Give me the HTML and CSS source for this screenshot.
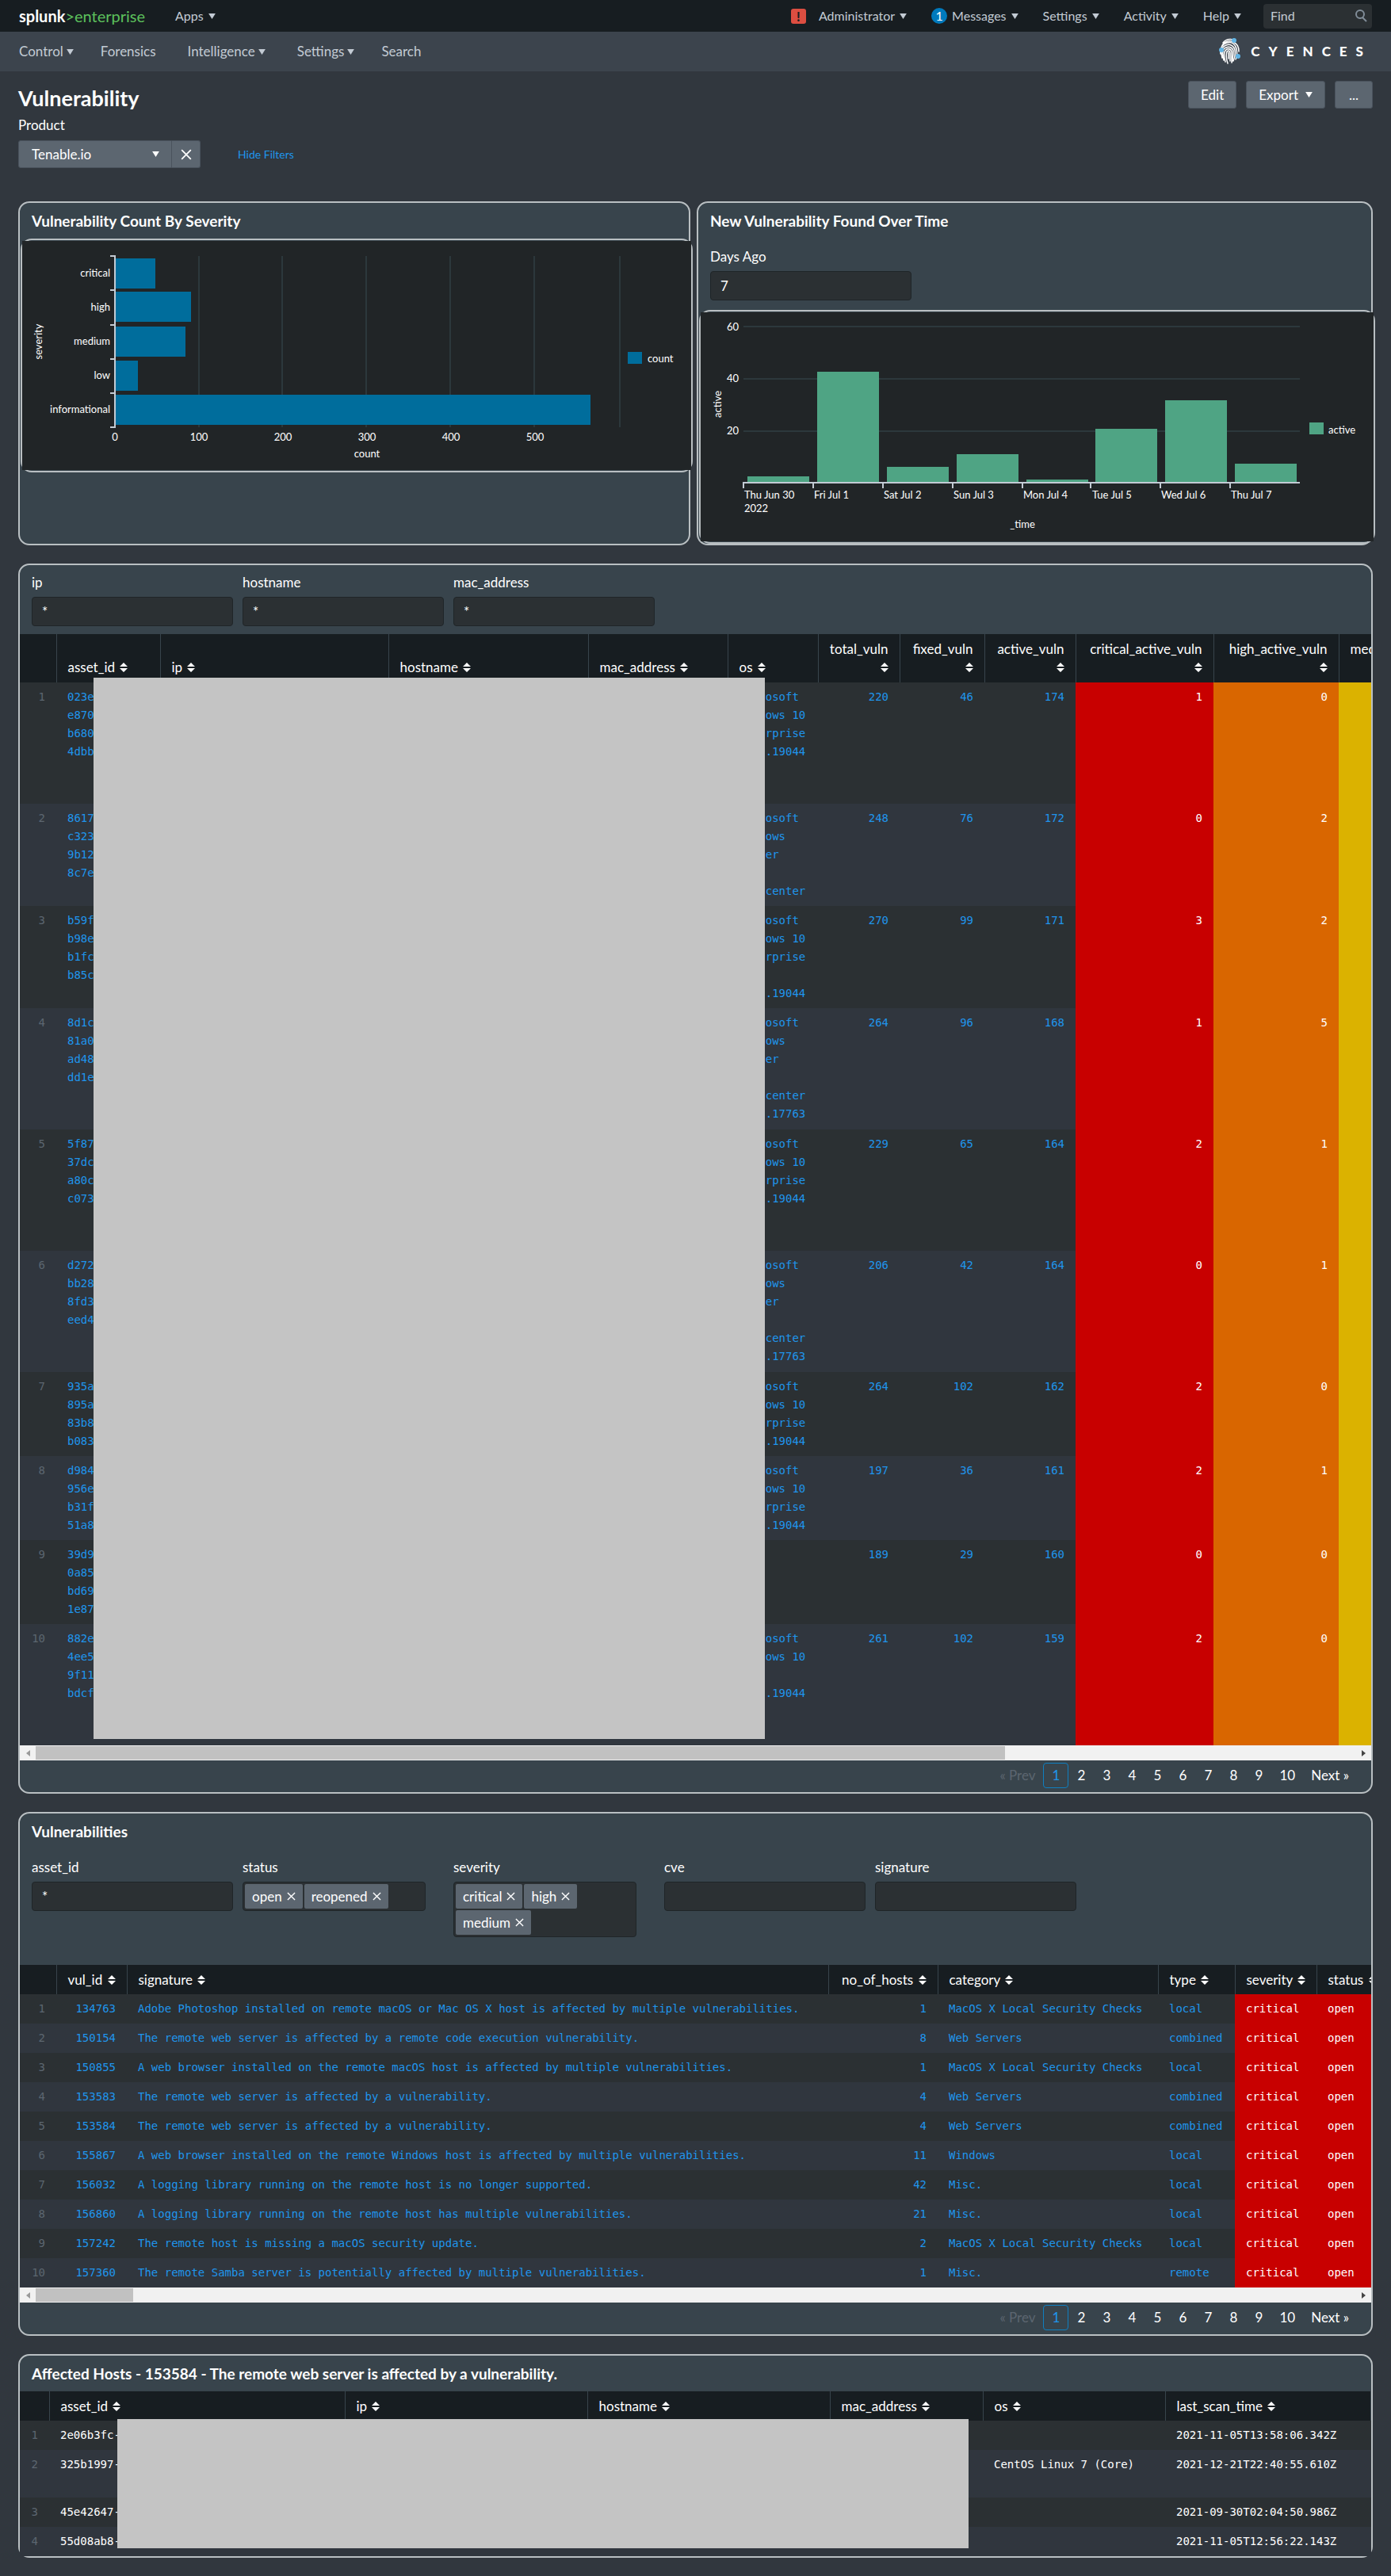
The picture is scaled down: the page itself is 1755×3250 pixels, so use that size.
FILE: index.html
```html
<!DOCTYPE html>
<html lang="en">
<head>
<meta charset="utf-8">
<meta name="viewport" content="width=device-width, initial-scale=1">
<title>Vulnerability | Splunk</title>
<link rel="stylesheet" href="styles.css">
</head>
<body>
<svg class="defs" aria-hidden="true">
  <symbol id="caret" viewBox="0 0 10 8"><path d="M0 0h10L5 8z" fill="currentColor"/></symbol>
  <symbol id="sort" viewBox="0 0 10 12"><path d="M5 0l5 5H0zM5 12L0 7h10z" fill="currentColor"/></symbol>
  <symbol id="cross" viewBox="0 0 12 12"><path d="M1 1l10 10M11 1L1 11" fill="none" stroke="currentColor" stroke-width="1.5"/></symbol>
  <symbol id="left" viewBox="0 0 5 8"><path d="M5 0v8L0 4z" fill="currentColor"/></symbol>
  <symbol id="right" viewBox="0 0 5 8"><path d="M0 0v8l5-4z" fill="currentColor"/></symbol>
</svg>

<header class="topbar">
  <a class="logo" href="#"><b>splunk</b><span>&gt;enterprise</span></a>
  <a class="menu" href="#">Apps <svg class="caret"><use href="#caret"/></svg></a>
  <nav class="account">
    <span class="alert">!</span>
    <a class="menu" href="#">Administrator <svg class="caret"><use href="#caret"/></svg></a>
    <a class="menu messages" href="#"><span class="count">1</span>Messages <svg class="caret"><use href="#caret"/></svg></a>
    <a class="menu" href="#">Settings <svg class="caret"><use href="#caret"/></svg></a>
    <a class="menu" href="#">Activity <svg class="caret"><use href="#caret"/></svg></a>
    <a class="menu" href="#">Help <svg class="caret"><use href="#caret"/></svg></a>
  </nav>
  <label class="find"><input type="text" placeholder="Find" aria-label="Find">
    <svg viewBox="0 0 16 16"><circle cx="7" cy="6" r="5" fill="none" stroke="currentColor" stroke-width="2"/><path d="M10 10l5 5" stroke="currentColor" stroke-width="2"/></svg></label>
</header>

<nav class="appnav">
  <a class="menu" href="#">Control<svg class="caret"><use href="#caret"/></svg></a>
  <a class="menu" href="#">Forensics</a>
  <a class="menu" href="#">Intelligence<svg class="caret"><use href="#caret"/></svg></a>
  <a class="menu" href="#">Settings<svg class="caret"><use href="#caret"/></svg></a>
  <a class="menu" href="#">Search</a>
  <a class="brand" href="#">
    <svg viewBox="0 0 27 34" fill="none" stroke="#fff" stroke-width="1.5" stroke-linecap="round">
      <path d="M5 6C8 2 13 1 18 2M3 12C5 5 12 2 18 5c5 2 7 7 7 12M2 20C1 12 5 7 10 6c6-2 11 2 12 8 1 5 1 9-1 13M4 25c-2-8-1-14 5-16 5-2 10 1 11 6 1 6 0 10-2 14M6 28C4 20 4 13 9 12c4-2 8 0 9 4 0 6 0 9-2 15M8 30c-2-7-2-14 2-16 3-1 5 0 6 3v14M11 32c-2-6-2-12-1-15 2-2 4-1 4 2v10M12 18v8"/>
      <g fill="#62b5e5" stroke="none"><circle cx="19" cy="3" r="3"/><circle cx="3" cy="15" r="3"/><circle cx="24" cy="23" r="3"/></g>
    </svg>
    <span>CYENCES</span>
  </a>
</nav>

<main>
  <div class="heading">
    <h1>Vulnerability</h1>
    <div class="actions">
      <button type="button">Edit</button>
      <button type="button">Export <svg class="caret"><use href="#caret"/></svg></button>
      <button type="button">...</button>
    </div>
  </div>
  <div class="product">
    <label for="product">Product</label>
    <div class="product-row">
      <div class="select"><select id="product"><option>Tenable.io</option></select><svg class="caret"><use href="#caret"/></svg></div>
      <button class="clear" type="button" aria-label="Clear"><svg><use href="#cross"/></svg></button>
      <a href="#">Hide Filters</a>
    </div>
  </div>

  <div class="charts">
    <section class="panel">
      <h2>Vulnerability Count By Severity</h2>
      <div class="chart">
        <svg viewBox="0 0 844 289">
          <g class="grid"><path d="M223 19v216M328 19v216M434 19v216M540 19v216M646 19v216M754 19v216"/></g>
          <g fill="#006d9c">
            <rect x="117" y="22" width="51" height="38"/><rect x="117" y="64" width="96" height="38"/><rect x="117" y="108" width="89" height="38"/><rect x="117" y="151" width="29" height="38"/><rect x="117" y="194" width="600" height="38"/>
            <rect x="764" y="140" width="18" height="15"/>
          </g>
          <path class="axis" d="M111 19h6v216h-6M111 62h6M111 106h6M111 149h6M111 192h6"/>
          <g text-anchor="end"><text x="111" y="45">critical</text><text x="111" y="88">high</text><text x="111" y="131">medium</text><text x="111" y="174">low</text><text x="111" y="217">informational</text></g>
          <g text-anchor="middle"><text x="117" y="252">0</text><text x="223" y="252">100</text><text x="329" y="252">200</text><text x="435" y="252">300</text><text x="541" y="252">400</text><text x="647" y="252">500</text><text x="435" y="273">count</text><text transform="translate(25 127) rotate(-90)">severity</text></g>
          <text x="789" y="153">count</text>
        </svg>
      </div>
    </section>
    <section class="panel">
      <h2>New Vulnerability Found Over Time</h2>
      <div class="filters short">
        <div class="field"><label for="days">Days Ago</label><input id="days" type="text" value="7"></div>
      </div>
      <div class="chart">
        <svg viewBox="0 0 849 289">
          <g class="grid"><path d="M54 18h702M54 84h702M54 150h702"/></g>
          <g fill="#4fa484">
            <rect x="59" y="207" width="78" height="8"/><rect x="147" y="75" width="78" height="140"/><rect x="235" y="195" width="78" height="20"/><rect x="323" y="179" width="78" height="36"/><rect x="411" y="211" width="78" height="4"/><rect x="498" y="147" width="78" height="68"/><rect x="586" y="111" width="78" height="104"/><rect x="674" y="191" width="78" height="24"/>
            <rect x="768" y="139" width="18" height="15"/>
          </g>
          <path class="axis" d="M54 222v-7h702M142 215v7M230 215v7M318 215v7M406 215v7M492 215v7M580 215v7M668 215v7"/>
          <g text-anchor="end"><text x="48" y="23">60</text><text x="48" y="88">40</text><text x="48" y="154">20</text></g>
          <text x="55" y="235">Thu Jun 30</text><text x="55" y="252">2022</text><text x="143" y="235">Fri Jul 1</text><text x="231" y="235">Sat Jul 2</text><text x="319" y="235">Sun Jul 3</text><text x="407" y="235">Mon Jul 4</text><text x="494" y="235">Tue Jul 5</text><text x="581" y="235">Wed Jul 6</text><text x="669" y="235">Thu Jul 7</text>
          <g text-anchor="middle"><text x="406" y="272">_time</text><text transform="translate(26 116) rotate(-90)">active</text></g>
          <text x="792" y="153">active</text>
        </svg>
      </div>
    </section>
  </div>

  <section class="panel">
    <div class="filters">
      <div class="field"><label for="ip">ip</label><input id="ip" type="text" value="*"></div>
      <div class="field"><label for="host">hostname</label><input id="host" type="text" value="*"></div>
      <div class="field"><label for="mac">mac_address</label><input id="mac" type="text" value="*"></div>
    </div>
    <div class="table-wrap">
      <table class="assets">
        <colgroup><col class="w46"><col class="w131"><col class="w288"><col class="w252"><col class="w176"><col class="w114"><col class="w103"><col class="w107"><col class="w115"><col class="w174"><col class="w158"><col></colgroup>
        <thead><tr><th></th>
          <th><a href="#">asset_id <svg class="sort"><use href="#sort"/></svg></a></th>
          <th><a href="#">ip <svg class="sort"><use href="#sort"/></svg></a></th>
          <th><a href="#">hostname <svg class="sort"><use href="#sort"/></svg></a></th>
          <th><a href="#">mac_address <svg class="sort"><use href="#sort"/></svg></a></th>
          <th><a href="#">os <svg class="sort"><use href="#sort"/></svg></a></th>
          <th class="num"><a href="#">total_vuln<br><svg class="sort"><use href="#sort"/></svg></a></th>
          <th class="num"><a href="#">fixed_vuln<br><svg class="sort"><use href="#sort"/></svg></a></th>
          <th class="num"><a href="#">active_vuln<br><svg class="sort"><use href="#sort"/></svg></a></th>
          <th class="num"><a href="#">critical_active_vuln<br><svg class="sort"><use href="#sort"/></svg></a></th>
          <th class="num"><a href="#">high_active_vuln<br><svg class="sort"><use href="#sort"/></svg></a></th>
          <th class="num"><a href="#">medium_active_vuln<br><svg class="sort"><use href="#sort"/></svg></a></th></tr></thead>
        <tbody>
          <tr class="tall"><td>1</td><td>023e<br>e870<br>b680<br>4dbb</td><td></td><td></td><td></td><td>Microsoft<br>Windows 10<br>Enterprise<br>10.0.19044</td><td class="num">220</td><td class="num">46</td><td class="num">174</td><td class="num red">1</td><td class="num orange">0</td><td class="yellow"></td></tr>
          <tr><td>2</td><td>8617<br>c323<br>9b12<br>8c7e</td><td></td><td></td><td></td><td>Microsoft<br>Windows<br>Server<br>2019<br>Datacenter</td><td class="num">248</td><td class="num">76</td><td class="num">172</td><td class="num red">0</td><td class="num orange">2</td><td class="yellow"></td></tr>
          <tr><td>3</td><td>b59f<br>b98e<br>b1fc<br>b85c</td><td></td><td></td><td></td><td>Microsoft<br>Windows 10<br>Enterprise<br><br>10.0.19044</td><td class="num">270</td><td class="num">99</td><td class="num">171</td><td class="num red">3</td><td class="num orange">2</td><td class="yellow"></td></tr>
          <tr class="tall"><td>4</td><td>8d1c<br>81a0<br>ad48<br>dd1e</td><td></td><td></td><td></td><td>Microsoft<br>Windows<br>Server<br>2019<br>Datacenter<br>10.0.17763</td><td class="num">264</td><td class="num">96</td><td class="num">168</td><td class="num red">1</td><td class="num orange">5</td><td class="yellow"></td></tr>
          <tr class="tall"><td>5</td><td>5f87<br>37dc<br>a80c<br>c073</td><td></td><td></td><td></td><td>Microsoft<br>Windows 10<br>Enterprise<br>10.0.19044</td><td class="num">229</td><td class="num">65</td><td class="num">164</td><td class="num red">2</td><td class="num orange">1</td><td class="yellow"></td></tr>
          <tr class="tall"><td>6</td><td>d272<br>bb28<br>8fd3<br>eed4</td><td></td><td></td><td></td><td>Microsoft<br>Windows<br>Server<br>2019<br>Datacenter<br>10.0.17763</td><td class="num">206</td><td class="num">42</td><td class="num">164</td><td class="num red">0</td><td class="num orange">1</td><td class="yellow"></td></tr>
          <tr><td>7</td><td>935a<br>895a<br>83b8<br>b083</td><td></td><td></td><td></td><td>Microsoft<br>Windows 10<br>Enterprise<br>10.0.19044</td><td class="num">264</td><td class="num">102</td><td class="num">162</td><td class="num red">2</td><td class="num orange">0</td><td class="yellow"></td></tr>
          <tr><td>8</td><td>d984<br>956e<br>b31f<br>51a8</td><td></td><td></td><td></td><td>Microsoft<br>Windows 10<br>Enterprise<br>10.0.19044</td><td class="num">197</td><td class="num">36</td><td class="num">161</td><td class="num red">2</td><td class="num orange">1</td><td class="yellow"></td></tr>
          <tr><td>9</td><td>39d9<br>0a85<br>bd69<br>1e87</td><td></td><td></td><td></td><td></td><td class="num">189</td><td class="num">29</td><td class="num">160</td><td class="num red">0</td><td class="num orange">0</td><td class="yellow"></td></tr>
          <tr class="tall"><td>10</td><td>882e<br>4ee5<br>9f11<br>bdcf</td><td></td><td></td><td></td><td>Microsoft<br>Windows 10<br><br>10.0.19044</td><td class="num">261</td><td class="num">102</td><td class="num">159</td><td class="num red">2</td><td class="num orange">0</td><td class="yellow"></td></tr>
        </tbody>
      </table>
      <div class="mask mask-assets"></div>
    </div>
    <div class="scrollbar"><svg><use href="#left"/></svg><div class="track"><div class="thumb" style="width:73.4%"></div></div><svg><use href="#right"/></svg></div>
    <nav class="pages"><span class="off">« Prev</span><a class="on" href="#">1</a><a href="#">2</a><a href="#">3</a><a href="#">4</a><a href="#">5</a><a href="#">6</a><a href="#">7</a><a href="#">8</a><a href="#">9</a><a href="#">10</a><a href="#">Next »</a></nav>
  </section>

  <section class="panel">
    <h2>Vulnerabilities</h2>
    <div class="filters long">
      <div class="field"><label for="asset">asset_id</label><input id="asset" type="text" value="*"></div>
      <div class="field"><span class="label" id="status-label">status</span>
        <div class="multi" role="group" aria-labelledby="status-label"><button type="button">open <svg><use href="#cross"/></svg></button><button type="button">reopened <svg><use href="#cross"/></svg></button></div></div>
      <div class="field"><span class="label" id="severity-label">severity</span>
        <div class="multi" role="group" aria-labelledby="severity-label"><button type="button">critical <svg><use href="#cross"/></svg></button><button type="button">high <svg><use href="#cross"/></svg></button><button type="button">medium <svg><use href="#cross"/></svg></button></div></div>
      <div class="field"><label for="cve">cve</label><input id="cve" type="text"></div>
      <div class="field"><label for="signature">signature</label><input id="signature" type="text"></div>
    </div>
    <div class="table-wrap">
      <table class="vulns">
        <colgroup><col class="w46"><col class="w89"><col class="w885"><col class="w138"><col class="w278"><col class="w97"><col class="w103"><col></colgroup>
        <thead><tr><th></th>
          <th><a href="#">vul_id <svg class="sort"><use href="#sort"/></svg></a></th>
          <th><a href="#">signature <svg class="sort"><use href="#sort"/></svg></a></th>
          <th class="num"><a href="#">no_of_hosts <svg class="sort"><use href="#sort"/></svg></a></th>
          <th><a href="#">category <svg class="sort"><use href="#sort"/></svg></a></th>
          <th><a href="#">type <svg class="sort"><use href="#sort"/></svg></a></th>
          <th><a href="#">severity <svg class="sort"><use href="#sort"/></svg></a></th>
          <th><a href="#">status <svg class="sort"><use href="#sort"/></svg></a></th></tr></thead>
        <tbody>
          <tr><td>1</td><td class="num">134763</td><td>Adobe Photoshop installed on remote macOS or Mac OS X host is affected by multiple vulnerabilities.</td><td class="num">1</td><td>MacOS X Local Security Checks</td><td>local</td><td class="red">critical</td><td class="red">open</td></tr>
          <tr><td>2</td><td class="num">150154</td><td>The remote web server is affected by a remote code execution vulnerability.</td><td class="num">8</td><td>Web Servers</td><td>combined</td><td class="red">critical</td><td class="red">open</td></tr>
          <tr><td>3</td><td class="num">150855</td><td>A web browser installed on the remote macOS host is affected by multiple vulnerabilities.</td><td class="num">1</td><td>MacOS X Local Security Checks</td><td>local</td><td class="red">critical</td><td class="red">open</td></tr>
          <tr><td>4</td><td class="num">153583</td><td>The remote web server is affected by a vulnerability.</td><td class="num">4</td><td>Web Servers</td><td>combined</td><td class="red">critical</td><td class="red">open</td></tr>
          <tr><td>5</td><td class="num">153584</td><td>The remote web server is affected by a vulnerability.</td><td class="num">4</td><td>Web Servers</td><td>combined</td><td class="red">critical</td><td class="red">open</td></tr>
          <tr><td>6</td><td class="num">155867</td><td>A web browser installed on the remote Windows host is affected by multiple vulnerabilities.</td><td class="num">11</td><td>Windows</td><td>local</td><td class="red">critical</td><td class="red">open</td></tr>
          <tr><td>7</td><td class="num">156032</td><td>A logging library running on the remote host is no longer supported.</td><td class="num">42</td><td>Misc.</td><td>local</td><td class="red">critical</td><td class="red">open</td></tr>
          <tr><td>8</td><td class="num">156860</td><td>A logging library running on the remote host has multiple vulnerabilities.</td><td class="num">21</td><td>Misc.</td><td>local</td><td class="red">critical</td><td class="red">open</td></tr>
          <tr><td>9</td><td class="num">157242</td><td>The remote host is missing a macOS security update.</td><td class="num">2</td><td>MacOS X Local Security Checks</td><td>local</td><td class="red">critical</td><td class="red">open</td></tr>
          <tr><td>10</td><td class="num">157360</td><td>The remote Samba server is potentially affected by multiple vulnerabilities.</td><td class="num">1</td><td>Misc.</td><td>remote</td><td class="red">critical</td><td class="red">open</td></tr>
        </tbody>
      </table>
    </div>
    <div class="scrollbar"><svg><use href="#left"/></svg><div class="track"><div class="thumb" style="width:7.4%"></div></div><svg><use href="#right"/></svg></div>
    <nav class="pages"><span class="off">« Prev</span><a class="on" href="#">1</a><a href="#">2</a><a href="#">3</a><a href="#">4</a><a href="#">5</a><a href="#">6</a><a href="#">7</a><a href="#">8</a><a href="#">9</a><a href="#">10</a><a href="#">Next »</a></nav>
  </section>

  <section class="panel">
    <h2>Affected Hosts - 153584 - The remote web server is affected by a vulnerability.</h2>
    <div class="table-wrap">
      <table class="hosts">
        <colgroup><col class="w37"><col class="w373"><col class="w306"><col class="w306"><col class="w193"><col class="w230"><col></colgroup>
        <thead><tr><th></th>
          <th><a href="#">asset_id <svg class="sort"><use href="#sort"/></svg></a></th>
          <th><a href="#">ip <svg class="sort"><use href="#sort"/></svg></a></th>
          <th><a href="#">hostname <svg class="sort"><use href="#sort"/></svg></a></th>
          <th><a href="#">mac_address <svg class="sort"><use href="#sort"/></svg></a></th>
          <th><a href="#">os <svg class="sort"><use href="#sort"/></svg></a></th>
          <th><a href="#">last_scan_time <svg class="sort"><use href="#sort"/></svg></a></th></tr></thead>
        <tbody>
          <tr><td>1</td><td>2e06b3fc-</td><td></td><td></td><td></td><td></td><td>2021-11-05T13:58:06.342Z</td></tr>
          <tr class="double"><td>2</td><td>325b1997-</td><td></td><td></td><td></td><td>CentOS Linux 7 (Core)</td><td>2021-12-21T22:40:55.610Z</td></tr>
          <tr><td>3</td><td>45e42647-</td><td></td><td></td><td></td><td></td><td>2021-09-30T02:04:50.986Z</td></tr>
          <tr><td>4</td><td>55d08ab8-</td><td></td><td></td><td></td><td></td><td>2021-11-05T12:56:22.143Z</td></tr>
        </tbody>
      </table>
      <div class="mask mask-hosts"></div>
    </div>
  </section>
</main>
</body>
</html>
```
FILE: styles.css
```css
* { box-sizing: border-box; }
body {
  margin: 0;
  background: #31373e;
  color: #fff;
  font: 17px/24px Lato, "Open Sans", sans-serif;
}
a { color: inherit; text-decoration: none; }
button, input, select { font: inherit; color: inherit; margin: 0; }
button { cursor: pointer; }
.defs { display: none; }
.caret { width: 9px; height: 7px; flex: none; }
.sort { width: 10px; height: 12px; margin-left: 2px; }

.topbar { display: flex; align-items: center; height: 40px; padding: 0 24px; background: #171d21; font-size: 16px; color: #c3cbd4; }
.menu { display: flex; align-items: center; gap: 6px; }
.logo { font-size: 20px; color: #5cc05c; margin-right: 38px; }
.logo b { color: #fff; }
.account { display: flex; align-items: center; gap: 31px; margin-left: auto; }
.alert { width: 19px; height: 19px; line-height: 19px; margin-right: -15px; border-radius: 3px; background: #dc4e41; color: #171d21; text-align: center; font-weight: 900; }
.count { width: 20px; height: 20px; line-height: 20px; border-radius: 50%; background: #007abd; color: #fff; text-align: center; }
.find { display: flex; align-items: center; width: 137px; height: 31px; margin-left: 28px; padding: 0 6px 0 9px; border-radius: 4px; background: #2b3033; color: #818d99; }
.find input { flex: 1; min-width: 0; padding: 0; border: 0; outline: 0; background: none; }
.find input::placeholder { color: #c3cbd4; opacity: 1; }
.find svg { width: 16px; height: 16px; }

.appnav { display: flex; align-items: center; height: 50px; padding: 0 24px; background: #3c444d; color: #c3cbd4; }
.appnav .menu { gap: 4px; margin-right: 34px; }
.appnav .menu:nth-child(2), .appnav .menu:nth-child(3) { margin-right: 40px; }
.brand { display: flex; align-items: center; gap: 13px; margin-left: auto; color: #fff; font-weight: 900; font-size: 17px; }
.brand svg { width: 27px; height: 34px; }
.brand span { letter-spacing: 11px; }

main { padding: 0 23px 24px; }
.heading { display: flex; justify-content: space-between; align-items: flex-start; padding-top: 12px; }
h1 { margin: 5px 0 0; font-size: 27px; line-height: 34px; font-weight: 700; }
.actions { display: flex; gap: 12px; }
.actions button, .select select, .clear { height: 35px; border: 1px solid #4a535d; background: #5c6670; border-radius: 3px; }
.actions button { display: flex; align-items: center; justify-content: center; gap: 9px; min-width: 48px; padding: 0 15px; }
.product { padding-top: 5px; }
.product-row { display: flex; align-items: center; padding-top: 7px; }
.select { position: relative; width: 194px; }
.select select { display: block; width: 100%; padding: 0 16px; appearance: none; border-radius: 3px 0 0 3px; }
.select .caret { position: absolute; right: 16px; top: 14px; }
.clear { display: grid; place-items: center; width: 36px; padding: 0; border-left: 0; border-radius: 0 3px 3px 0; }
.clear svg { width: 14px; height: 14px; }
.product-row a { margin-left: 47px; color: #1f95ec; font-size: 14px; }

.charts { display: grid; grid-template-columns: 848fr 853fr; gap: 8px; margin-top: 42px; }
.panel { min-width: 0; margin-bottom: 23px; border: 2px solid #b9bfc2; border-radius: 14px; background: #38444c; }
main > .panel:last-child { margin-bottom: 0; }
h2 { margin: 0; padding: 11px 15px 10px; font-size: 19px; line-height: 24px; font-weight: 700; }
.chart { position: relative; margin: 0 -5px 0 1px; padding: 1px 0 1px; border: 2px solid #b9bfc2; border-radius: 14px; }
.chart svg { display: block; width: 100%; background: #212527; }
.chart text { font-size: 13px; fill: #fff; }
.grid { stroke: #2c383c; stroke-width: 2; }
.axis { fill: none; stroke: #c3cbd4; stroke-width: 2; }

.filters { display: flex; align-items: flex-start; gap: 12px; padding: 10px 15px; }
.filters.short { padding: 11px 15px 12px; }
.filters.long { padding: 11px 15px 35px; }
.field { width: 254px; }
.field label, .field .label { display: block; margin-bottom: 6px; }
.field input { display: block; width: 100%; height: 37px; padding: 0 12px; border: 1px solid #1f2528; border-radius: 4px; background: #2b3033; }
.multi { display: flex; flex-wrap: wrap; gap: 2px; width: 231px; min-height: 37px; padding: 2px; border: 1px solid #1f2528; border-radius: 4px; background: #2b3033; }
.multi button { display: flex; align-items: center; gap: 6px; height: 31px; padding: 0 9px; border: 0; border-radius: 2px; background: #5c6670; }
.multi svg { width: 11px; height: 11px; }

.table-wrap { position: relative; overflow: hidden; }
table { width: 100%; border-collapse: collapse; table-layout: fixed; }
.assets { width: 1842px; }
.vulns { width: 1760px; }
th { padding: 7px 14px 8px; background: #171d21; border-right: 1px solid #38444c; line-height: 23px; font-weight: 400; text-align: left; vertical-align: bottom; white-space: nowrap; }
.vulns th, .hosts th { padding: 7px 14px; }
td { padding: 7px 14px; color: #1f95ec; font: 14px/23px "DejaVu Sans Mono", monospace; vertical-align: top; white-space: nowrap; }
tbody tr:nth-child(odd) { background: #2b3033; }
tbody tr:nth-child(even) { background: #30363e; }
td:first-child { color: #5c6670; text-align: right; }
.hosts td { color: #fff; }
.hosts td:first-child { color: #5c6670; }
.num { text-align: right; }
.tall { height: 153px; }
.double { height: 60px; }
td.red { background: #c80000; color: #fff; }
td.orange { background: #d96600; color: #fff; }
td.yellow { background: #dbb200; }
.w37 { width: 37px; } .w46 { width: 46px; } .w89 { width: 89px; } .w97 { width: 97px; }
.w103 { width: 103px; } .w107 { width: 107px; } .w114 { width: 114px; } .w115 { width: 115px; }
.w131 { width: 131px; } .w138 { width: 138px; } .w158 { width: 158px; } .w174 { width: 174px; }
.w176 { width: 176px; } .w193 { width: 193px; } .w230 { width: 230px; } .w252 { width: 252px; }
.w278 { width: 278px; } .w288 { width: 288px; } .w306 { width: 306px; } .w373 { width: 373px; } .w885 { width: 885px; }

/* redaction blocks over private values */
.mask { position: absolute; background: #c4c4c4; }
.mask-assets { left: 93px; top: 55px; bottom: 8px; width: 847px; }
.mask-hosts { left: 123px; top: 35px; bottom: 10px; width: 1074px; }

.scrollbar { display: flex; align-items: center; gap: 7px; height: 19px; padding: 0 7px 0 8px; background: #f1f1f1; }
.scrollbar svg { width: 5px; height: 8px; color: #444; }
.scrollbar svg:first-child { color: #999; }
.track { flex: 1; }
.thumb { height: 17px; background: #c1c1c1; }
.pages { display: flex; justify-content: flex-end; padding: 3px 18px 5px; }
.pages > * { min-width: 32px; height: 32px; padding: 0 10px; line-height: 32px; text-align: center; }
.pages .on { padding: 0; line-height: 30px; border: 1px solid #0f7fc0; border-radius: 4px; color: #1f95ec; }
.pages .off { color: #5c6670; }
```
